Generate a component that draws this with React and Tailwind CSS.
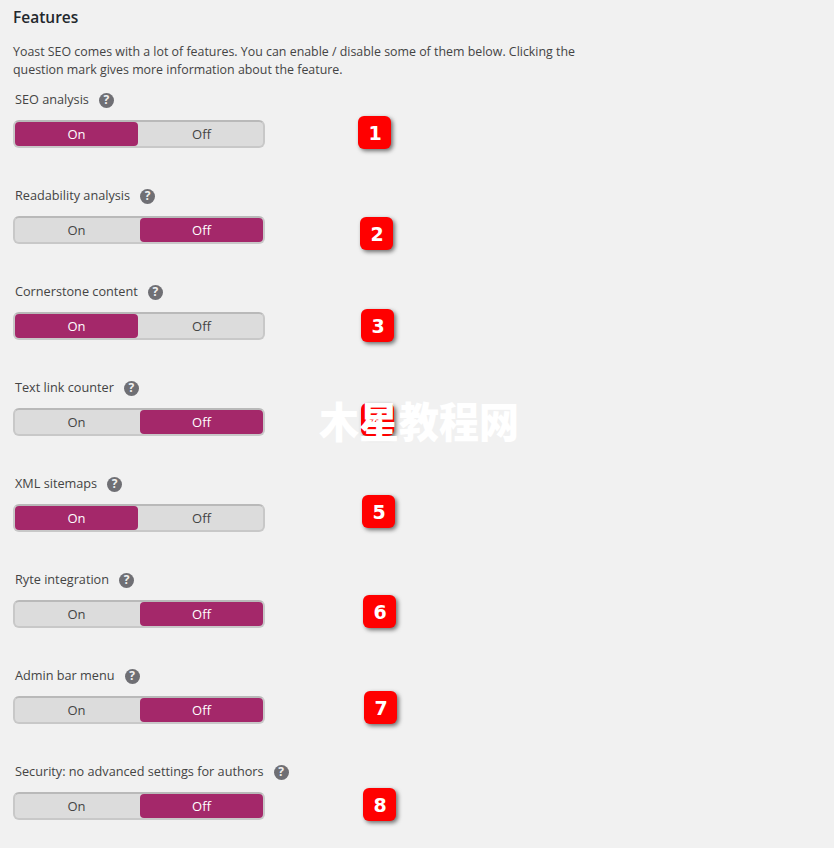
import React from "react";

const features = [
    { label: "SEO analysis", on: true, badge: "left-[358px] top-[116px]" },
    { label: "Readability analysis", on: false, badge: "left-[360px] top-[217px]" },
    { label: "Cornerstone content", on: true, badge: "left-[361px] top-[309px]" },
    { label: "Text link counter", on: false, badge: "left-[361px] top-[403px]" },
    { label: "XML sitemaps", on: true, badge: "left-[362px] top-[495px]" },
    { label: "Ryte integration", on: false, badge: "left-[363px] top-[595px]" },
    { label: "Admin bar menu", on: false, badge: "left-[364px] top-[691px]" },
    { label: "Security: no advanced settings for authors", on: false, badge: "left-[363px] top-[788px]" },
];

const HelpIcon = () => (
    <span className="ml-[10px] flex h-[15px] w-[15px] items-center justify-center rounded-full bg-[#6f6f74] text-[12px] leading-none font-bold text-[#f1f1f1]">
        ?
    </span>
);

const Toggle = ({ on }) => {
    const active = "rounded-[4px] bg-[#a4286a] text-white";
    const inactive = "text-[#444444]";
    return (
        <div className="flex h-[28px] w-[252px] gap-[2px] rounded-[6px] border-2 border-[#c8c8c8] border-t-[#b9b9b9] bg-[#dcdcdc] text-[13px]">
            <span className={`flex w-[123px] items-center justify-center pt-[2px] ${on ? active : inactive}`}>On</span>
            <span className={`flex w-[123px] items-center justify-center pt-[2px] ${on ? inactive : active}`}>Off</span>
        </div>
    );
};

const App = () => {
    return (
        <div className="relative h-[848px] w-[834px] overflow-hidden bg-[#f1f1f1] font-['Open_Sans','Noto_Sans',sans-serif] text-[#444444]">
            <div className="px-[13px] pt-[7px]">
                <h2 className="text-[15.5px] leading-[20px] font-semibold text-[#23282d]">Features</h2>
                <p className="mt-[16px] w-[580px] text-[12.4px] leading-[18px]">
                    Yoast SEO comes with a lot of features. You can enable / disable some of them below. Clicking the question mark gives more information about the feature.
                </p>
                <div className="mt-[7px] flex flex-col gap-[34px]">
                    {features.map((feature) => (
                        <div key={feature.label}>
                            <div className="flex h-[28px] items-center pl-[2px] text-[12.7px] font-medium">
                                <span>{feature.label}</span>
                                <HelpIcon />
                            </div>
                            <div className="mt-[6px]">
                                <Toggle on={feature.on} />
                            </div>
                        </div>
                    ))}
                </div>
            </div>

            {/* numbered callouts pasted over the screenshot */}
            {features.map((feature, i) => (
                <div
                    key={i}
                    className={`absolute flex h-[33px] w-[33px] items-center justify-center rounded-[6px] bg-[#ff0000] pt-[1px] pl-[1px] font-['DejaVu_Sans',sans-serif] text-[19px] font-bold text-white shadow-[2px_2px_4px_rgba(0,0,0,0.55)] ${feature.badge}`}
                >
                    {i + 1}
                </div>
            ))}

            {/* watermark */}
            <div className="absolute top-[391px] left-[319px] origin-top scale-y-[1.05] font-['Noto_Sans_CJK_SC',sans-serif] text-[40px] leading-[56px] font-black whitespace-nowrap text-white">
                木星教程网
            </div>
        </div>
    );
};

export default App;
